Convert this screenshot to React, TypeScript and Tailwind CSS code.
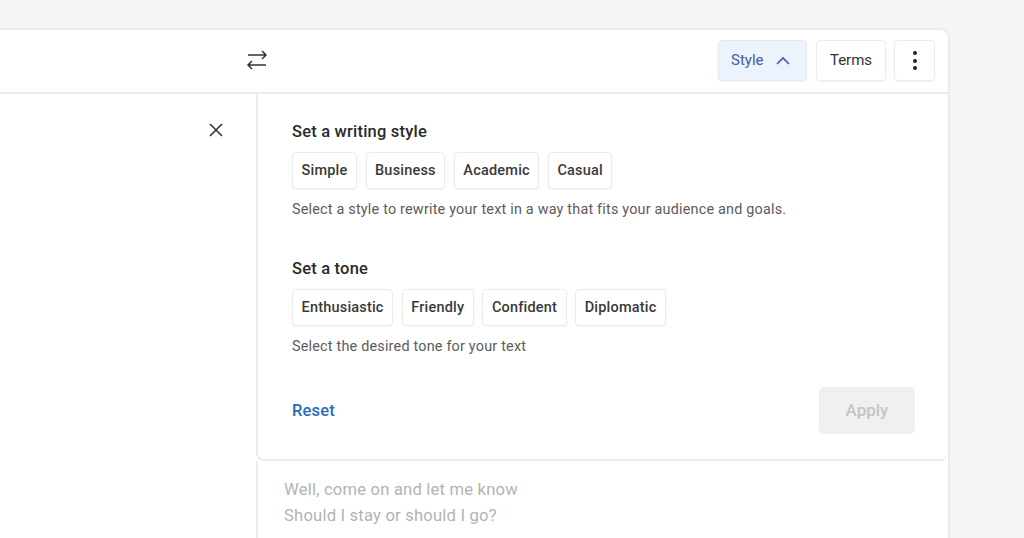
import React from "react";

const styles = ["Simple", "Business", "Academic", "Casual"];
const tones = ["Enthusiastic", "Friendly", "Confident", "Diplomatic"];

const Chip = ({ label }: { label: string }) => (
    <button className="h-[37px] rounded-[4px] border border-[#ececec] bg-white px-[8.5px] text-[14.5px] font-medium tracking-[0.2px] text-[#3a3a3a] shadow-[0_1px_2px_rgba(0,0,0,0.05)]">
        {label}
    </button>
);

export default function App() {
    return (
        <div className="h-[538px] w-[1024px] overflow-hidden bg-[#f5f5f5] pt-[28px] font-['Roboto',sans-serif]">
            <div className="h-[520px] w-[950px] rounded-tr-[10px] border-r-2 border-t-2 border-[#ececec] bg-white">
                {/* Top bar */}
                <div className="flex h-[64px] items-center border-b-2 border-[#ececec] pb-px pr-[13px]">
                    <svg className="ml-[245px] h-6 w-6" viewBox="0 0 24 24" fill="none" stroke="#333" strokeWidth="1.5">
                        <path d="M3 6h18M17 2l4 4-4 4" />
                        <path d="M21 16H3M7 12l-4 4 4 4" />
                    </svg>
                    <div className="ml-auto flex items-center gap-[8px]">
                        <button className="mr-px flex h-[41px] w-[89px] items-center rounded-[4px] border border-[#e2e9f3] bg-[#edf3fc] pl-[12px] text-[15px] text-[#3f5fa8] shadow-[0_1px_2px_rgba(0,0,0,0.05)]">
                            Style
                            <svg className="ml-[12px] h-[14px] w-[14px]" viewBox="0 0 14 14" fill="none" stroke="#3f5fa8" strokeWidth="1.7">
                                <path d="M1 10l6-6 6 6" />
                            </svg>
                        </button>
                        <button className="h-[41px] w-[70px] rounded-[4px] border border-[#ececec] bg-white text-[15px] text-[#333] shadow-[0_1px_2px_rgba(0,0,0,0.05)]">
                            Terms
                        </button>
                        <button className="flex h-[41px] w-[41px] flex-col items-center justify-center gap-[3.5px] rounded-[4px] border border-[#ececec] bg-white shadow-[0_1px_2px_rgba(0,0,0,0.05)]">
                            <span className="h-[4px] w-[4px] rounded-full bg-[#222]" />
                            <span className="h-[4px] w-[4px] rounded-full bg-[#222]" />
                            <span className="h-[4px] w-[4px] rounded-full bg-[#222]" />
                        </button>
                    </div>
                </div>

                <div className="flex">
                    {/* Left column */}
                    <div className="flex h-[470px] w-[256px] shrink-0 justify-end pr-[33px] pt-[29px]">
                        <svg className="h-[14px] w-[14px]" viewBox="0 0 14 14" fill="none" stroke="#333" strokeWidth="1.6">
                            <path d="M1 1l12 12M13 1L1 13" />
                        </svg>
                    </div>

                    {/* Style panel */}
                    <div className="flex min-w-0 flex-1 flex-col">
                        <div className="h-[367px] rounded-b-[8px] border-b-2 border-l-2 border-[#ececec] pl-[34px] pr-[33px] pt-[26px]">
                            <h2 className="text-[16.5px] font-medium leading-[24px] tracking-[0.2px] text-[#2a2a2a]">Set a writing style</h2>
                            <div className="mt-[8px] flex gap-[8.6px]">
                                {styles.map((s) => (
                                    <Chip key={s} label={s} />
                                ))}
                            </div>
                            <p className="mt-[11px] text-[14.4px] leading-[20px] tracking-[0.2px] text-[#5c5c5c]">
                                Select a style to rewrite your text in a way that fits your audience and goals.
                            </p>
                            <h2 className="mt-[37px] text-[16.5px] font-medium leading-[24px] tracking-[0.2px] text-[#2a2a2a]">Set a tone</h2>
                            <div className="mt-[8px] flex gap-[8.6px]">
                                {tones.map((t) => (
                                    <Chip key={t} label={t} />
                                ))}
                            </div>
                            <p className="mt-[11px] text-[14.4px] leading-[20px] tracking-[0.2px] text-[#5c5c5c]">
                                Select the desired tone for your text
                            </p>
                            <div className="mt-[30px] flex items-center justify-between">
                                <button className="pt-[2px] text-[16.5px] font-medium tracking-[0.2px] text-[#2b6cb8]">Reset</button>
                                <button className="h-[47px] w-[96px] rounded-[5px] bg-[#f0f0f0] text-[17px] font-medium text-[#c4c4c4]">Apply</button>
                            </div>
                        </div>
                        <div className="flex-1 border-l-2 border-[#ececec] pl-[26px] pt-[16px] text-[16.6px] leading-[26px] tracking-[0.2px] text-[#b3b3b3]">
                            <p>Well, come on and let me know</p>
                            <p>Should I stay or should I go?</p>
                        </div>
                    </div>
                </div>
            </div>
        </div>
    );
}
